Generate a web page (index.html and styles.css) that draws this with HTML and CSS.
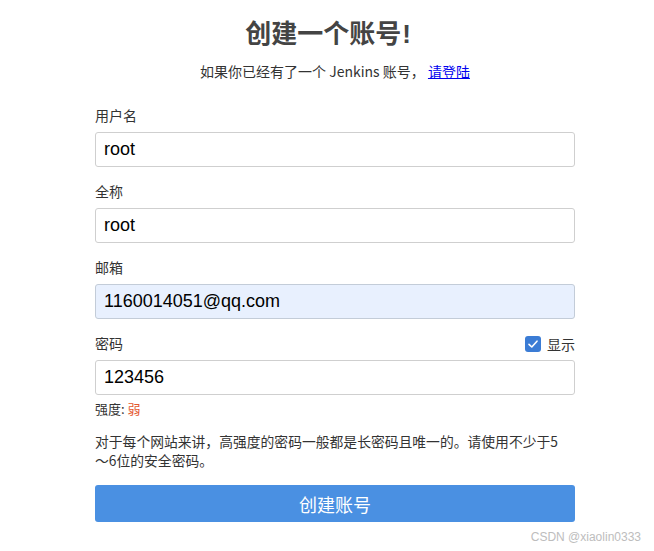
FILE: index.html
```html
<!DOCTYPE html>
<html lang="zh">
<head>
<meta charset="utf-8">
<title>创建一个账号</title>
<link rel="stylesheet" href="styles.css">
</head>
<body>
<div class="page">
  <h1 class="title">创建一个账号<span class="bang">!</span></h1>
  <p class="subtitle">如果你已经有了一个 Jenkins 账号， <a href="#" class="login-link">请登陆</a></p>
  <form class="form">
    <div class="field">
      <label class="label">用户名</label>
      <input class="input" type="text" value="root">
    </div>
    <div class="field">
      <label class="label">全称</label>
      <input class="input" type="text" value="root">
    </div>
    <div class="field">
      <label class="label">邮箱</label>
      <input class="input input-autofill" type="text" value="1160014051@qq.com">
    </div>
    <div class="field">
      <div class="label-row">
        <label class="label">密码</label>
        <span class="show-toggle"><span class="checkbox"><svg viewBox="0 0 16 16" width="16" height="16"><path d="M4 8.3 L6.8 11 L12 5.2" fill="none" stroke="#fff" stroke-width="1.6" stroke-linecap="round" stroke-linejoin="round"/></svg></span>显示</span>
      </div>
      <input class="input" type="text" value="123456">
      <div class="strength">强度: <span class="weak">弱</span></div>
    </div>
    <p class="hint">对于每个网站来讲，高强度的密码一般都是长密码且唯一的。请使用不少于5<br>～6位的安全密码。</p>
    <button type="button" class="submit">创建账号</button>
  </form>
</div>
<div class="watermark">CSDN @xiaolin0333</div>
</body>
</html>
```

FILE: styles.css
```css
html, body {
  margin: 0;
  padding: 0;
  background: #fff;
}
body {
  font-family: "Noto Sans CJK SC", "Liberation Sans", sans-serif;
  color: #333;
  padding-left: 16px;
  height: 551px;
  position: relative;
  overflow: hidden;
}
.page {
  width: 480px;
  margin: 0 auto;
}
.title {
  margin: 0;
  padding-top: 14px;
  height: 36px;
  line-height: 36px;
  font-size: 26px;
  font-weight: bold;
  color: #444;
  text-align: center;
  padding-right: 14px;
}
.bang {
  font-family: "Liberation Sans", sans-serif;
  margin-left: 1px;
}
.subtitle {
  margin: 10px 0 0;
  height: 22px;
  line-height: 22px;
  font-size: 14px;
  color: #333;
  text-align: center;
}
.login-link {
  color: #0000ee;
  text-decoration: underline;
}
.form {
  margin-top: 25px;
}
.field {
  display: flex;
  flex-direction: column;
  margin-bottom: 16px;
}
.label {
  display: block;
  height: 18px;
  line-height: 16px;
  font-size: 14px;
  color: #333;
  margin-bottom: 7px;
}
.label-row {
  display: flex;
  justify-content: space-between;
  align-items: flex-start;
}
.show-toggle {
  display: flex;
  align-items: center;
  gap: 6px;
  font-size: 14px;
  height: 18px;
  line-height: 16px;
  color: #333;
}
.checkbox {
  width: 16px;
  height: 16px;
  border-radius: 3px;
  background: #3b7cd5;
  display: flex;
}
.input {
  box-sizing: border-box;
  width: 480px;
  height: 35px;
  margin: 0;
  padding: 0 8px;
  border: 1px solid #cfcfcf;
  border-radius: 3px;
  font-family: "Liberation Sans", sans-serif;
  font-size: 18px;
  color: #000;
  background: #fff;
  outline: none;
}
.input-autofill {
  background: #e8f0fe;
  border-color: #c3ccd8;
}
.strength {
  margin-top: 4px;
  height: 20px;
  line-height: 20px;
  font-size: 13px;
  color: #333;
}
.weak {
  color: #e4572e;
}
.hint {
  margin: -3px 0 0;
  font-size: 13.8px;
  line-height: 19px;
  color: #333;
}
.submit {
  display: block;
  width: 480px;
  height: 37px;
  margin-top: 15px;
  border: none;
  border-radius: 3px;
  background: #4a90e2;
  color: #fff;
  font-family: "Noto Sans CJK SC", sans-serif;
  font-size: 18px;
  cursor: pointer;
}
.watermark {
  position: absolute;
  right: 13px;
  top: 530px;
  font-family: "Liberation Sans", sans-serif;
  font-size: 12px;
  color: #bdbdbd;
}
```
